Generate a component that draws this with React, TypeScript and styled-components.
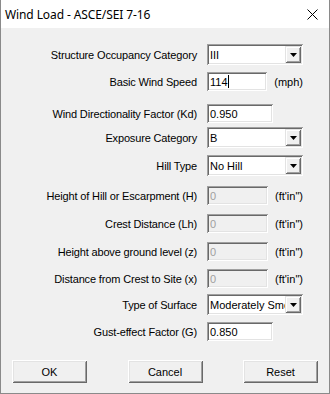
import { createGlobalStyle } from 'styled-components';
import styled from 'styled-components';

const GlobalStyle = createGlobalStyle`
  html, body {
    margin: 0;
    padding: 0;
    background: #ffffff;
  }
`;

const Window = styled.div`
  width: 330px;
  height: 394px;
  box-sizing: border-box;
  background: #f0f0f0;
  border: 1px solid #8a8a8a;
  border-top: none;
  display: flex;
  flex-direction: column;
  font-family: "Liberation Sans", Arial, sans-serif;
  font-size: 11px;
  color: #000;
`;

const TitleBar = styled.div`
  height: 28px;
  flex: none;
  background: #ffffff;
  display: flex;
  align-items: center;
  justify-content: space-between;
  padding: 0 11px 0 4px;
`;

const Title = styled.span`
  font-family: "Noto Sans", "Open Sans", sans-serif;
  font-size: 12px;
  color: #000;
  letter-spacing: -0.1px;
`;

const Form = styled.div`
  display: flex;
  flex-direction: column;
  padding-top: 16px;
`;

interface RowProps {
  $mt: number;
}

const Row = styled.div<RowProps>`
  display: grid;
  grid-template-columns: 196px 96px auto;
  column-gap: 10px;
  align-items: center;
  margin-top: ${({ $mt }) => $mt}px;
`;

const Label = styled.span`
  text-align: right;
  white-space: nowrap;
  letter-spacing: -0.15px;
`;

const Field = styled.div`
  display: flex;
  align-items: center;
  gap: 7px;
`;

const Sunken = styled.div`
  box-sizing: border-box;
  box-shadow:
    inset 1px 1px 0 #a0a0a0,
    inset -1px -1px 0 #ffffff,
    inset 2px 2px 0 #696969,
    inset -2px -2px 0 #e3e3e3;
`;

interface TextBoxProps {
  $disabled?: boolean;
}

const TextBox = styled(Sunken)<TextBoxProps>`
  width: 66px;
  height: 19px;
  padding: 0 3px;
  display: flex;
  align-items: center;
  background: ${({ $disabled }) => ($disabled ? '#f0f0f0' : '#ffffff')};
  color: ${({ $disabled }) => ($disabled ? '#a0a0a0' : '#000')};
  white-space: nowrap;
`;

const Caret = styled.span`
  display: inline-block;
  width: 1px;
  height: 13px;
  background: #000;
`;

const Unit = styled.span`
  white-space: nowrap;
`;

const Combo = styled(Sunken)`
  width: 96px;
  height: 21px;
  padding: 2px;
  display: flex;
  align-items: stretch;
  background: #ffffff;
`;

const ComboText = styled.span`
  flex: 1;
  min-width: 0;
  overflow: hidden;
  white-space: nowrap;
  padding-left: 1px;
  display: flex;
  align-items: center;
`;

const DropButton = styled.div`
  width: 16px;
  flex: none;
  background: #f0f0f0;
  display: flex;
  align-items: center;
  justify-content: center;
  box-shadow:
    inset 1px 1px 0 #e3e3e3,
    inset -1px -1px 0 #696969,
    inset 2px 2px 0 #ffffff,
    inset -2px -2px 0 #a0a0a0;
`;

const Buttons = styled.div`
  display: flex;
  justify-content: space-between;
  padding: 0 11px;
  margin-top: 19px;
`;

const Button = styled.div`
  width: 75px;
  height: 23px;
  box-sizing: border-box;
  background: #f0f0f0;
  display: flex;
  align-items: center;
  justify-content: center;
  box-shadow:
    inset 1px 1px 0 #ffffff,
    inset -1px -1px 0 #696969,
    inset 2px 2px 0 #e3e3e3,
    inset -2px -2px 0 #a0a0a0;
`;

const Arrow = () => (
  <svg width="7" height="4" viewBox="0 0 7 4">
    <path d="M0 0 H7 L3.5 4 Z" fill="#000" />
  </svg>
);

const CloseIcon = () => (
  <svg width="11" height="11" viewBox="0 0 11 11">
    <path d="M0.5 0.5 L10.5 10.5 M10.5 0.5 L0.5 10.5" stroke="#000" strokeWidth="1" fill="none" />
  </svg>
);

const ComboBox = ({ value }: { value: string }) => (
  <Combo>
    <ComboText>{value}</ComboText>
    <DropButton>
      <Arrow />
    </DropButton>
  </Combo>
);

type RowDef =
  | { kind: 'combo'; label: string; value: string; mt: number }
  | { kind: 'text'; label: string; value: string; mt: number; unit?: string; disabled?: boolean; caret?: boolean };

const rows: RowDef[] = [
  { kind: 'combo', label: 'Structure Occupancy Category', value: 'III', mt: 0 },
  { kind: 'text', label: 'Basic Wind Speed', value: '114', unit: '(mph)', caret: true, mt: 7 },
  { kind: 'text', label: 'Wind Directionality Factor (Kd)', value: '0.950', mt: 13 },
  { kind: 'combo', label: 'Exposure Category', value: 'B', mt: 4 },
  { kind: 'combo', label: 'Hill Type', value: 'No Hill', mt: 7 },
  { kind: 'text', label: 'Height of Hill or Escarpment (H)', value: '0', unit: '(ft\'in")', disabled: true, mt: 10 },
  { kind: 'text', label: 'Crest Distance (Lh)', value: '0', unit: '(ft\'in")', disabled: true, mt: 9 },
  { kind: 'text', label: 'Height above ground level (z)', value: '0', unit: '(ft\'in")', disabled: true, mt: 9 },
  { kind: 'text', label: 'Distance from Crest to Site (x)', value: '0', unit: '(ft\'in")', disabled: true, mt: 8 },
  { kind: 'combo', label: 'Type of Surface', value: 'Moderately Smooth', mt: 6 },
  { kind: 'text', label: 'Gust-effect Factor (G)', value: '0.850', mt: 7 },
];

export default function App() {
  return (
    <>
      <GlobalStyle />
      <Window>
        <TitleBar>
          <Title>Wind Load - ASCE/SEI 7-16</Title>
          <CloseIcon />
        </TitleBar>
        <Form>
          {rows.map((row) => (
            <Row key={row.label} $mt={row.mt}>
              <Label>{row.label}</Label>
              {row.kind === 'combo' ? (
                <ComboBox value={row.value} />
              ) : (
                <Field>
                  <TextBox $disabled={row.disabled}>
                    {row.value}
                    {row.caret ? <Caret /> : null}
                  </TextBox>
                  {row.unit ? <Unit>{row.unit}</Unit> : null}
                </Field>
              )}
              <span />
            </Row>
          ))}
        </Form>
        <Buttons>
          <Button>OK</Button>
          <Button>Cancel</Button>
          <Button>Reset</Button>
        </Buttons>
      </Window>
    </>
  );
}
